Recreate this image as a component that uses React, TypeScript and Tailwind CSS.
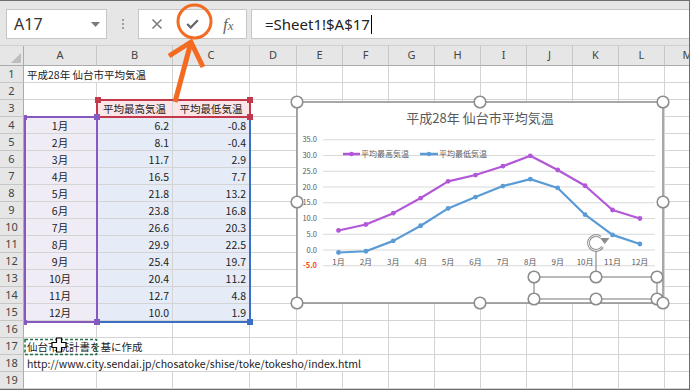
import React from "react";

const COLS = ["", "A", "B", "C", "D", "E", "F", "G", "H", "I", "J", "K", "L", "M"];
const MONTHS = ["1月", "2月", "3月", "4月", "5月", "6月", "7月", "8月", "9月", "10月", "11月", "12月"];
const HIGH = [6.2, 8.1, 11.7, 16.5, 21.8, 23.8, 26.6, 29.9, 25.4, 20.4, 12.7, 10.0];
const LOW = [-0.8, -0.4, 2.9, 7.7, 13.2, 16.8, 20.3, 22.5, 19.7, 11.2, 4.8, 1.9];

type Cell = { text?: string; align?: string; fill?: string; noRight?: boolean };

const cellAt = (r: number, c: number): Cell => {
  if (r === 1 && c === 1) return { text: "平成28年 仙台市平均気温", align: "text-left", noRight: true };
  if (r === 3 && c === 2) return { text: "平均最高気温", align: "text-center", fill: "bg-[#fbe5e7]" };
  if (r === 3 && c === 3) return { text: "平均最低気温", align: "text-center", fill: "bg-[#fbe5e7]" };
  if (r >= 4 && r <= 15) {
    const i = r - 4;
    if (c === 1) return { text: MONTHS[i], align: "text-center", fill: "bg-[#f0ecf6]" };
    if (c === 2) return { text: HIGH[i].toFixed(1), align: "text-right", fill: "bg-[#e5ecf7]" };
    if (c === 3) return { text: LOW[i].toFixed(1), align: "text-right", fill: "bg-[#e5ecf7]" };
  }
  if (r === 17 && c === 1) return { text: "仙台市統計書を基に作成", align: "text-left", noRight: true };
  if (r === 18 && c === 1)
    return { text: "http://www.city.sendai.jp/chosatoke/shise/toke/tokesho/index.html", align: "text-left", noRight: true };
  if (r === 18 && c >= 2 && c <= 5) return { noRight: true };
  return {};
};

const FormulaBar = () => (
  <div className="flex h-[46px] items-start border-b border-[#d0d0d0] bg-[#e6e6e6] pl-[6px] pt-[9px]">
    <div className="flex h-[30px] w-[101px] items-center justify-between border border-[#c6c6c6] bg-white pl-[7px] pr-[6px]">
      <span className="font-['Noto_Sans',sans-serif] text-[16px] leading-none text-[#333]">A17</span>
      <svg width="9" height="5" viewBox="0 0 9 5">
        <path d="M0 0h9L4.5 5z" fill="#7a7a7a" />
      </svg>
    </div>
    <div className="flex h-[30px] w-[31px] flex-col items-center justify-center gap-[2px]">
      <span className="h-[2px] w-[2px] bg-[#a0a0a0]" />
      <span className="h-[2px] w-[2px] bg-[#a0a0a0]" />
      <span className="h-[2px] w-[2px] bg-[#a0a0a0]" />
    </div>
    <div className="flex h-[30px] w-[109px] items-center border border-[#c6c6c6] bg-white">
      <div className="flex w-[36px] justify-center">
        <svg width="12" height="12" viewBox="0 0 12 12">
          <path d="M1.5 1.5l9 9M10.5 1.5l-9 9" stroke="#7a7a7a" strokeWidth="1.5" />
        </svg>
      </div>
      <div className="flex w-[36px] justify-center">
        <svg width="13" height="10" viewBox="0 0 13 10">
          <path d="M1.2 5l3.5 3.5L11.8 1.2" stroke="#666" strokeWidth="2.3" fill="none" />
        </svg>
      </div>
      <div className="flex w-[36px] justify-center">
        <span className="font-['Liberation_Serif',serif] text-[17px] italic leading-none text-[#666]">
          f<span className="text-[13px]">x</span>
        </span>
      </div>
    </div>
    <div className="ml-[4px] flex h-[30px] flex-1 items-center border border-r-0 border-[#c6c6c6] bg-white pl-[13px]">
      <span className="font-['Noto_Sans',sans-serif] text-[15px] leading-none text-[#222]">=Sheet1!$A$17</span>
      <span className="ml-[1px] h-[19px] w-px bg-black" />
    </div>
  </div>
);

const Sheet = () => (
  <div className="grid grid-cols-[24px_73px_76px_77px_47px_46px_46px_46px_46px_46px_46px_46px_46px_46px]">
    {COLS.map((c, i) =>
      i === 0 ? (
        <div key="corner" className="flex h-[20px] items-end justify-end border-r border-b border-[#ababab] bg-[#e6e6e6] pb-[2px] pr-[2px]">
          <svg width="10" height="10" viewBox="0 0 10 10">
            <path d="M10 0v10H0z" fill="#bdbdbd" />
          </svg>
        </div>
      ) : (
        <div
          key={c}
          className="flex h-[20px] items-center justify-center border-r border-b border-r-[#c6c6c6] border-b-[#ababab] bg-[#e6e6e6] font-['Noto_Sans',sans-serif] text-[11px] text-[#444]"
        >
          {c}
        </div>
      )
    )}
    {Array.from({ length: 19 }, (_, k) => k + 1).map((r) =>
      COLS.map((_, c) => {
        if (c === 0)
          return (
            <div
              key={`${r}-0`}
              className="flex h-[17px] items-center justify-center border-r border-b border-r-[#ababab] border-b-[#c6c6c6] bg-[#e6e6e6] font-['Noto_Sans',sans-serif] text-[11px] text-[#444]"
            >
              {r}
            </div>
          );
        const cell = cellAt(r, c);
        return (
          <div
            key={`${r}-${c}`}
            className={`h-[17px] whitespace-nowrap border-b border-[#d4d4d4] px-[3px] text-[10.5px] leading-[17px] text-[#222] ${
              cell.noRight ? "" : "border-r"
            } ${cell.align ?? ""} ${cell.fill ?? ""}`}
          >
            {cell.text}
          </div>
        );
      })
    )}
  </div>
);

const RangeOutlines = () => (
  <>
    <div className="pointer-events-none absolute left-[96px] top-[116px] h-[207px] w-[155px] border-2 border-[#3a6fc6]" />
    <div className="pointer-events-none absolute left-[96px] top-[99px] h-[19px] w-[155px] border-2 border-[#c3384b]" />
    <div className="pointer-events-none absolute left-[24px] top-[116px] h-[207px] w-[74px] border-2 border-[#8758c0]" />
    <div className="absolute left-[95px] top-[97px] h-[6px] w-[6px] bg-[#c3384b]" />
    <div className="absolute left-[247px] top-[97px] h-[6px] w-[6px] bg-[#c3384b]" />
    <div className="absolute left-[247px] top-[114px] h-[6px] w-[6px] bg-[#c3384b]" />
    <div className="absolute left-[94px] top-[114px] h-[6px] w-[6px] bg-[#8758c0]" />
    <div className="absolute left-[24px] top-[115px] h-[5px] w-[3px] bg-[#8758c0]" />
    <div className="absolute left-[24px] top-[320px] h-[5px] w-[3px] bg-[#8758c0]" />
    <div className="absolute left-[94px] top-[319px] h-[6px] w-[6px] bg-[#8758c0]" />
    <div className="absolute left-[247px] top-[319px] h-[6px] w-[6px] bg-[#3a6fc6]" />
  </>
);

const mx = (i: number) => 41.5 + i * 27.4;
const gy = (v: number) => 148 - v * 3.15;

const Chart = () => (
  <div className="absolute left-[297px] top-[102px] h-[201px] w-[366px] bg-white">
    <svg width="366" height="201" viewBox="0 0 366 201" className="font-['Noto_Sans_CJK_JP',sans-serif]">
      <text x="183" y="21" textAnchor="middle" fontSize="13" fill="#595959">
        平成28年 仙台市平均気温
      </text>
      {[35, 30, 25, 20, 15, 10, 5, 0, -5].map((v) => (
        <g key={v}>
          <line x1="26" x2="358" y1={gy(v)} y2={gy(v)} stroke="#d9d9d9" strokeWidth="1" />
          <text
            x="20"
            y={gy(v) + 2.6}
            textAnchor="end"
            fontSize="7.5"
            fill={v < 0 ? "#f24a1c" : "#595959"}
            fontWeight={v < 0 ? 700 : 400}
          >
            {v.toFixed(1)}
          </text>
        </g>
      ))}
      {MONTHS.map((m, i) => (
        <text key={m} x={mx(i)} y="163" textAnchor="middle" fontSize="8" fill="#595959">
          {m}
        </text>
      ))}
      <polyline
        points={HIGH.map((v, i) => `${mx(i)},${gy(v)}`).join(" ")}
        fill="none"
        stroke="#b257d8"
        strokeWidth="2.2"
        strokeLinejoin="round"
      />
      <polyline
        points={LOW.map((v, i) => `${mx(i)},${gy(v)}`).join(" ")}
        fill="none"
        stroke="#5b9bd5"
        strokeWidth="2.2"
        strokeLinejoin="round"
      />
      {HIGH.map((v, i) => (
        <circle key={`h${i}`} cx={mx(i)} cy={gy(v)} r="2.4" fill="#b257d8" />
      ))}
      {LOW.map((v, i) => (
        <circle key={`l${i}`} cx={mx(i)} cy={gy(v)} r="2.4" fill="#5b9bd5" />
      ))}
      <line x1="46" x2="63" y1="52" y2="52" stroke="#b257d8" strokeWidth="2.5" />
      <circle cx="54.5" cy="52" r="2.2" fill="#b257d8" />
      <text x="64" y="55" fontSize="8" fill="#595959">
        平均最高気温
      </text>
      <line x1="123" x2="141" y1="52" y2="52" stroke="#5b9bd5" strokeWidth="2.5" />
      <circle cx="132" cy="52" r="2.2" fill="#5b9bd5" />
      <text x="142" y="55" fontSize="8" fill="#595959">
        平均最低気温
      </text>
    </svg>
  </div>
);

const Handle = ({ x, y }: { x: number; y: number }) => (
  <circle cx={x} cy={y} r="5.8" fill="#fff" stroke="#8c8c8c" strokeWidth="1.6" />
);

const Overlay = () => (
  <svg className="pointer-events-none absolute left-0 top-0" width="690" height="390" viewBox="0 0 690 390">
    {/* chart frame */}
    <rect x="297" y="102" width="366" height="201" fill="none" stroke="#8c8c8c" strokeWidth="1.5" />
    {/* inner selected element */}
    <rect x="534" y="277" width="123" height="22" fill="none" stroke="#8c8c8c" strokeWidth="1.2" />
    <line x1="596" y1="251" x2="596" y2="277" stroke="#8c8c8c" strokeWidth="1.2" />
    <circle cx="596" cy="243" r="7.5" fill="none" stroke="#8c8c8c" strokeWidth="2.8" strokeDasharray="36 12" strokeDashoffset="-4" />
    <circle cx="596" cy="243" r="7.5" fill="none" stroke="#fff" strokeWidth="0.9" strokeDasharray="36 12" strokeDashoffset="-4" />
    <path d="M600 238h9.5l-4.8 6z" fill="#8c8c8c" />
    {[
      [297, 102], [480, 102], [663, 102], [297, 202], [663, 202], [297, 303], [480, 303],
      [534, 277], [596, 277], [657, 277], [534, 299], [596, 299], [657, 299], [663, 303],
    ].map(([x, y]) => (
      <Handle key={`${x}-${y}`} x={x} y={y} />
    ))}
    {/* copy marquee on A17 */}
    <rect x="25" y="339.5" width="71.5" height="15" fill="none" stroke="#217346" strokeWidth="1.5" strokeDasharray="3 2" />
    {/* cell cursor */}
    <path
      d="M56.5 338h5v4.5h4.5v5h-4.5v4.5h-5v-4.5H52v-5h4.5z"
      fill="#fff"
      stroke="#000"
      strokeWidth="1.2"
      strokeLinejoin="miter"
    />
    {/* orange callout */}
    <circle cx="194.5" cy="21.5" r="16.5" fill="none" stroke="#f26b21" strokeWidth="3" />
    <line x1="175" y1="102" x2="190.5" y2="44" stroke="#f26b21" strokeWidth="5" />
    <polyline points="169,56 191,42 203,67" fill="none" stroke="#f26b21" strokeWidth="5" strokeLinejoin="miter" />
  </svg>
);

export default function App() {
  return (
    <div className="relative h-[390px] w-[690px] overflow-hidden bg-white font-['Noto_Sans_CJK_JP',sans-serif] text-[#222]">
      <FormulaBar />
      <Sheet />
      <RangeOutlines />
      <Chart />
      <Overlay />
      <div className="pointer-events-none absolute inset-0 border-t border-r border-b border-[#6e6e6e]" />
    </div>
  );
}
